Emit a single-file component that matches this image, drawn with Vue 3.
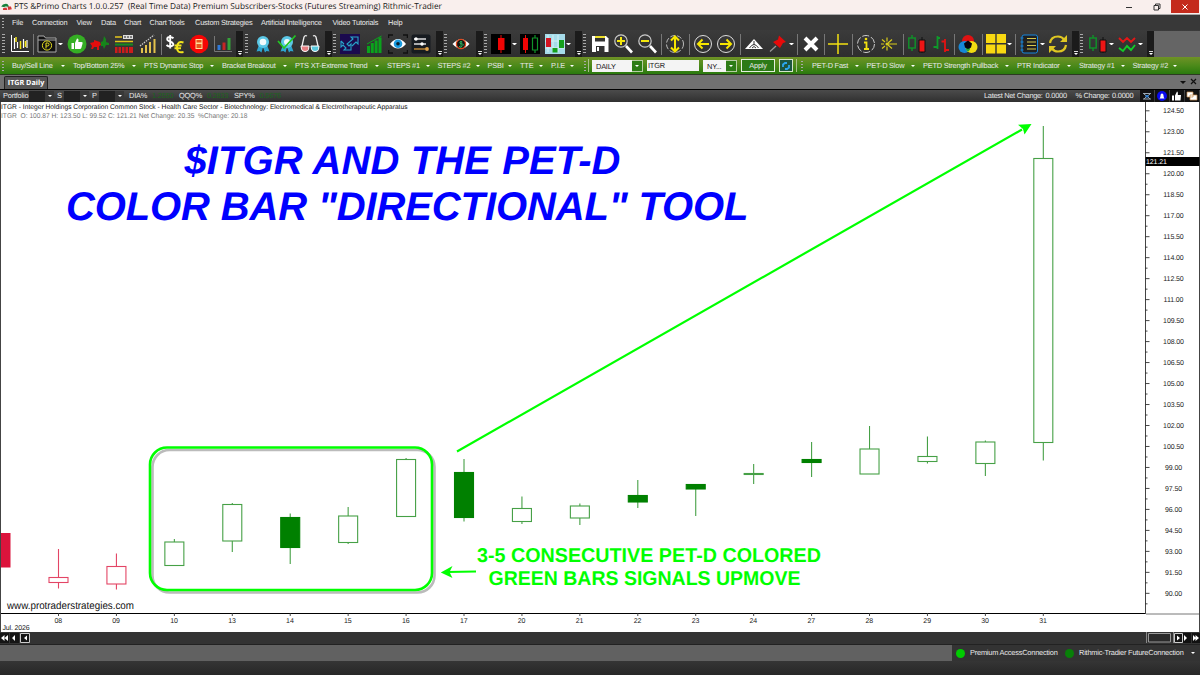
<template>
  <div class="app">
    <svg class="defs" width="0" height="0">
      <defs>
        <symbol id="i-chart" viewBox="0 0 20 20">
          <path d="M1.500 1v16.500H19" stroke="#fff" fill="none" />
          <path d="M4.500 4v11M7.500 8v6M13.500 5v9M17 6v8" stroke="#fff" stroke-width="1.200" />
          <path d="M6 3v5M10.500 7v8M15.500 7v6" stroke="#f1df16" stroke-width="1.500" />
        </symbol>
        <symbol id="i-folder" viewBox="0 0 20 20">
          <path d="M1 18V2h6l1.500 2H19v14z" fill="#111" stroke="#aaa" />
          <path d="M1 6h18" stroke="#aaa" />
          <circle cx="10" cy="11.500" r="4.600" fill="none" stroke="#e8e020" />
          <path d="M9 14.500V9h1.500a1.500 1.500 0 0 1 0 3H9" fill="none" stroke="#e8e020" />
        </symbol>
        <symbol id="i-like" viewBox="0 0 20 20">
          <circle cx="10" cy="10" r="9.500" fill="#35ae24" />
          <path d="M4.500 9h2.500v6H4.500zM8 9l2-4.500c1.500 0 1.800 1 1.300 3.500h3.200c1.500 0 1.200 1.300.8 2.500l-1 3.500q-.3 1-1.500 1H8z" fill="#fff" />
        </symbol>
        <symbol id="i-bulls" viewBox="0 0 20 20">
          <path d="M0 9l4-1V6l3 1 3 1 1 3-2 1v4H7v-3l-3 0-1 2H1l1-3z" fill="#e30d0d" />
          <path d="M11 8l2-1 1-5 2 3 0 3 3 1v2l-3 0-2 4-1-3-2 0z" fill="#16851b" />
        </symbol>
        <symbol id="i-levels" viewBox="0 0 20 20">
          <path d="M1 3h7M1 7.500h18" stroke="#e3c51c" stroke-width="1.500" />
          <path d="M9 1h10v4H9z" fill="#ddd" />
          <path d="M11 2v2M14 2v2M17 2v2" stroke="#222" />
          <path d="M1 10.500h18" stroke="#168a20" stroke-width="2" />
          <path d="M1 13h18v6H1z" fill="#cc1c1c" />
          <path d="M4 13v6M7.500 13v6M11 13v6M14.500 13v6" stroke="#333" />
        </symbol>
        <symbol id="i-growth" viewBox="0 0 20 20">
          <path d="M4 19v-5M8 19v-8M12 19V8M16.500 19V5" stroke="#e3c24c" stroke-width="2" />
          <path d="M2 12l5-4 4-3 5-4" stroke="#ccc" stroke-width="1.300" stroke-dasharray="1.500 1" fill="none" />
        </symbol>
        <symbol id="i-money" viewBox="0 0 20 20">
          <path d="M8.500 4.300Q7 3 5 3 2.200 3.200 2.200 5T5 7.500 8.300 10 5 12.500Q3 12.500 1.500 11M5.200 1v13.500" fill="none" stroke="#fff" stroke-width="1.900" />
          <path d="M18.500 8.500Q12.500 6.500 12 13t6.500 5M9.500 11.500h7M9.500 14.300h6.500" fill="none" stroke="#f3e51b" stroke-width="1.900" />
        </symbol>
        <symbol id="i-calc" viewBox="0 0 20 20">
          <circle cx="10" cy="10" r="9.300" fill="#f60505" />
          <path d="M6.500 5h7v10h-7z" fill="#ffdf9c" />
          <path d="M7.500 6h5v2.500h-5zM7.500 10h5v4h-5z" fill="#e8541b" />
        </symbol>
        <symbol id="i-bars" viewBox="0 0 20 20">
          <path d="M2.500 2v15.500H20" stroke="#777" fill="none" />
          <path d="M7 16v-5" stroke="#2f79d8" stroke-width="3" />
          <path d="M12 16V8.500" stroke="#c82626" stroke-width="3" />
          <path d="M17 16V4" stroke="#35a33a" stroke-width="3" />
        </symbol>
        <symbol id="i-ribbon" viewBox="0 0 20 20">
          <path d="M6 11l-2.500 6.500 3-.5 2 1.500L10 13l2 5.500 1.500-1.500 3 .5L14 11" fill="#2fa5cf" />
          <circle cx="10" cy="8" r="6" fill="#5cc8e6" />
          <circle cx="10" cy="8" r="3.300" fill="#f3fafc" />
        </symbol>
        <symbol id="i-ribbon-check" viewBox="0 0 20 20">
          <path d="M6 11l-2.500 6.500 3-.5 2 1.500L10 13l2 5.500 1.500-1.500 3 .5L14 11" fill="#2fa5cf" />
          <circle cx="10" cy="8" r="6" fill="#5cc8e6" />
          <circle cx="10" cy="8" r="3" fill="#f3fafc" />
          <path d="M1 7l6 7L18.500 1.500" fill="none" stroke="#22c722" stroke-width="1.700" />
        </symbol>
        <symbol id="i-glasses" viewBox="0 0 20 20">
          <path d="M2 12L4 3q1-2 3-1M18 12L16 3q-1-2-3-1" fill="none" stroke="#eee" stroke-width="1.300" />
          <path d="M1 12h8l-.5 3.500q-.5 2-3.500 2T1.500 15z" fill="#e57f83" stroke="#fff" />
          <path d="M11 12h8l-.5 3.500q-.5 2-3.500 2T11.500 15z" fill="#58c8dd" stroke="#fff" />
        </symbol>
        <symbol id="i-swing" viewBox="0 0 20 20">
          <path d="M0 0h20v20H0z" fill="#1b0a4e" />
          <path d="M1 7v6l2-2 3 3-2 2h7v-6l-2 2-2-2 6-5-2-2h7v7l-2-2-4 4M1 7l3 3" fill="none" stroke="#28a3c9" stroke-width="1.100" />
        </symbol>
        <symbol id="i-stairs" viewBox="0 0 20 20">
          <path d="M4.500 19v-7M8.300 19V9M12.100 19V6.500M16 19V3.500" stroke="#0aa31c" stroke-width="3" />
          <path d="M3 10L17.500 2" stroke="#0aa31c" />
        </symbol>
        <symbol id="i-eye" viewBox="0 0 20 20">
          <path d="M.5 4V1H5M15 1h4.500v3M.5 16v3H5M15 19h4.500v-3" fill="none" stroke="#111" stroke-width="1.500" />
          <path d="M2 10q8-10 16 0-8 9-16 0z" fill="#fff" />
          <circle cx="10" cy="9.700" r="4.300" fill="#1a9be0" />
          <circle cx="10" cy="9.700" r="1.800" fill="#07222f" />
        </symbol>
        <symbol id="i-sliders" viewBox="0 0 20 20">
          <rect x=".5" y=".5" width="19" height="19" rx="2" fill="#171b20" />
          <path d="M3 5h12M3 10h12" stroke="#ddd" stroke-width="1.300" />
          <path d="M3 15h14" stroke="#b98232" stroke-width="1.500" />
          <circle cx="5" cy="5" r="1.700" fill="#fff" /><circle cx="11" cy="10" r="1.700" fill="#fff" />
          <circle cx="16" cy="15" r="1.900" fill="#e1a44d" />
        </symbol>
        <symbol id="i-eye-red" viewBox="0 0 20 20">
          <path d="M1.500 10q8.500-9.500 17 0-8.500 9-17 0z" fill="#fff" />
          <circle cx="10" cy="10" r="4.600" fill="#151515" stroke="#e1491d" stroke-width="1.300" />
          <path d="M11.300 8q-2.500-1-2.500.5t2.400 1.500-.2 2.400-2.500-.4M10 7v6" fill="none" stroke="#2fcf6b" stroke-width=".8" />
        </symbol>
        <symbol id="i-candle-red" viewBox="0 0 20 20">
          <path d="M0 0h20v20H0z" />
          <path d="M10 1v18" stroke="#e80c0c" />
          <path d="M7 4h6.500v12H7z" fill="#f00505" />
        </symbol>
        <symbol id="i-candle-pair" viewBox="0 0 20 20">
          <path d="M0 0h20v20H0z" />
          <path d="M5.500 1v18" stroke="#e80c0c" />
          <path d="M3 4h5v12H3z" fill="#f00505" />
          <path d="M15 1v3M15 16v3M12.500 4h5v12h-5z" fill="none" stroke="#11932a" stroke-width="1.200" />
        </symbol>
        <symbol id="i-pattern" viewBox="0 0 20 20">
          <path d="M0 0h20v20H0z" fill="#a6dcea" />
          <path d="M3 1v17M8 1v17M13 1v17M0 7h20M0 14h20" stroke="#d6f0f5" />
          <path d="M1 4h5v9H1z" fill="#d41522" />
          <path d="M7.500 14h5v4.500h-5zM14 6h5v8h-5z" fill="#15a01c" />
        </symbol>
        <symbol id="i-save" viewBox="0 0 20 20">
          <path d="M2 2h14l2.500 2.500V18H2z" fill="#fff" />
          <path d="M5 2h10v5.500H5zM6 12h8.500v6H6z" fill="#333" />
          <path d="M5 3h10" stroke="#eee02b" stroke-width="2" /><path d="M8 13v4" stroke="#fff" stroke-width="2" />
        </symbol>
        <symbol id="i-zoom-in" viewBox="0 0 20 20">
          <circle cx="7" cy="7" r="6.200" fill="none" stroke="#ccc" stroke-width="1.200" />
          <path d="M3 7h8M7 3v8" stroke="#f4e70d" stroke-width="2" />
          <path d="M12 12l6 6.500" stroke="#fff" stroke-width="2.600" />
        </symbol>
        <symbol id="i-zoom-out" viewBox="0 0 20 20">
          <circle cx="7" cy="7" r="6.200" fill="none" stroke="#ccc" stroke-width="1.200" />
          <path d="M3 7h8" stroke="#f4e70d" stroke-width="2" />
          <path d="M12 12l6 6.500" stroke="#fff" stroke-width="2.600" />
        </symbol>
        <symbol id="i-updown" viewBox="0 0 20 20">
          <circle cx="10" cy="10" r="8.500" fill="none" stroke="#bbb" stroke-dasharray="5 2" />
          <path d="M10 3v14M6 6.500L10 2.500l4 4M6 13.500l4 4 4-4" fill="none" stroke="#f7e600" stroke-width="2" />
        </symbol>
        <symbol id="i-left" viewBox="0 0 20 20">
          <circle cx="10" cy="10" r="8.500" fill="none" stroke="#ddd" />
          <path d="M16 10H5M9.500 5.500L5 10l4.500 4.500" fill="none" stroke="#f7e600" stroke-width="2" />
        </symbol>
        <symbol id="i-right" viewBox="0 0 20 20">
          <circle cx="10" cy="10" r="8.500" fill="none" stroke="#ddd" />
          <path d="M4 10h11M10.500 5.500L15 10l-4.500 4.500" fill="none" stroke="#f7e600" stroke-width="2" />
        </symbol>
        <symbol id="i-ruler" viewBox="0 0 20 20">
          <path d="M10 5L1 15h18z" fill="#fff" />
          <path d="M5.500 14q4.500-7 9 0M8 14q2-3 4 0M10 7v4" fill="none" stroke="#333" />
        </symbol>
        <symbol id="i-pin" viewBox="0 0 20 20">
          <path d="M8 12l-6 5.500" stroke="#999" stroke-width="1.300" />
          <path d="M11 1.500l7 6.500-3 1-3 5-7-6 5-2.500z" fill="#e60a0a" />
        </symbol>
        <symbol id="i-close" viewBox="0 0 20 20"><path d="M4 4l12 12M16 4L4 16" stroke="#fff" stroke-width="4" /></symbol>
        <symbol id="i-cross" viewBox="0 0 20 20"><path d="M10 0v20M0 10h20" stroke="#f2e011" stroke-width="1.500" /></symbol>
        <symbol id="i-info" viewBox="0 0 20 20">
          <circle cx="10" cy="10" r="8.500" fill="none" stroke="#ccc" stroke-dasharray="7 2" />
          <path d="M8 8.500h2.500V15M8 15h5" fill="none" stroke="#f2e011" stroke-width="1.800" />
          <circle cx="10" cy="5" r="1.300" fill="#f2e011" />
        </symbol>
        <symbol id="i-spark" viewBox="0 0 20 20">
          <path d="M8 10h10M2 10h3M8 3.500v4M8 12.500v4M3 5.500l3 2.500M3 14.500l3-2.500M9 9l4-3.500M9 11l4 3.500" fill="none" stroke="#d9cc1b" stroke-width="1.200" />
          <circle cx="8" cy="10" r="1.500" fill="#d9cc1b" />
        </symbol>
        <symbol id="i-candles" viewBox="0 0 20 20">
          <path d="M5 1v3M5 14v3M1.800 4H8.200v10H1.800z" fill="none" stroke="#118f2a" stroke-width="1.500" />
          <path d="M15 3v16" stroke="#111" />
          <path d="M12 6h6v12h-6z" fill="#ee1515" stroke="#111" />
        </symbol>
        <symbol id="i-ohlc" viewBox="0 0 20 20">
          <path d="M6.500 2v13M2.500 13h4M6.500 4H9" stroke="#0e9a2a" stroke-width="1.800" />
          <path d="M14 5v13M10.500 7.500H14M14 16h4" stroke="#e31212" stroke-width="1.800" />
        </symbol>
        <symbol id="i-rgb" viewBox="0 0 20 20">
          <circle cx="10" cy="7" r="6" fill="#e01212" />
          <circle cx="6.500" cy="13" r="6" fill="#1688d8" />
          <circle cx="13.500" cy="13" r="6" fill="#f2dc12" />
          <path d="M10 8.200a6 6 0 0 1 0 9.600 6 6 0 0 1 0-9.600z" fill="#1ea53a" />
          <path d="M10 6.500l4 3-1 4-3 1.500-3-1.500-1-4z" fill="#04050f" />
        </symbol>
        <symbol id="i-grid" viewBox="0 0 20 20"><path d="M0 0h9.300v9H0zM10.700 0H20v9h-9.300zM0 10.500h9.300v9H0zM10.700 10.500H20v9h-9.300z" fill="#f9d911" /></symbol>
        <symbol id="i-list" viewBox="0 0 20 20">
          <rect x="3" y="1" width="15.500" height="18" rx="2" fill="#202020" stroke="#1787df" />
          <path d="M1.500 4h3M1.500 8h3M1.500 12h3M1.500 16h3" stroke="#1787df" />
          <path d="M8 4.500h9M8 8h9M8 11.500h9M8 15h9" stroke="#d6c84d" />
        </symbol>
        <symbol id="i-refresh" viewBox="0 0 20 20">
          <path d="M2 9Q3 2.500 10 2.500q4 0 6.500 3.500M18 11q-1 6.500-8 6.500-4 0-6.500-3.500" fill="none" stroke="#dfc722" stroke-width="2.200" />
          <path d="M19 1v7h-7zM1 19v-7h7z" fill="#dfc722" />
        </symbol>
        <symbol id="i-zigzag" viewBox="0 0 20 20">
          <path d="M2 4l4 4 4-4 4 4 4-4" fill="none" stroke="#e31717" stroke-width="1.900" />
          <path d="M2 14l4 3 4-5 4 4 4-5" fill="none" stroke="#12cc28" stroke-width="1.900" />
        </symbol>
      </defs>
    </svg>

    <header class="titlebar">
      <svg class="logo" viewBox="0 0 12 9">
        <path d="M0 4q2-4 7-3l2 3-4 1z" fill="#16813b" />
        <path d="M2 6l4-1 1 3H2zM7 4h4l1 3-4 1z" fill="#d53636" /><path d="M4 4.500h3" stroke="#fff" />
      </svg>
      <span class="title">PTS &amp;Primo Charts 1.0.0.257&nbsp; (Real Time Data) Premium Subscribers-Stocks (Futures Streaming) Rithmic-Tradier</span>
      <span class="win-btn"><svg width="8" height="8"><path d="M1 4.500h6" stroke="#333" /></svg></span>
      <span class="win-btn">
        <svg width="8" height="8"><path d="M1 2.500h4.500V7H1zM2.500 2.500V1H7v4.500H5.500" fill="none" stroke="#333" /></svg>
      </span>
      <span class="win-btn win-close"><svg width="8" height="8"><path d="M1.500 1.500l5 5M6.500 1.500l-5 5" stroke="#fff" /></svg></span>
      <span class="win-edge"></span>
    </header>

    <nav class="menu">
      <i class="grip"></i>
      <span v-for="m in menus" :key="m.label" :style="{ width: m.w + 'px' }">{{ m.label }}</span>
    </nav>

    <div class="toolbar">
      <template v-for="(t, i) in tools" :key="i">
        <svg v-if="t[0].startsWith('i-')" class="tool" :style="{ marginLeft: t[1] + 'px' }"><use :href="'#' + t[0]" /></svg>
        <i v-else :class="t[0]" :style="{ marginLeft: t[1] + 'px' }"></i>
      </template>
      <i class="toolbar-rest"></i>
    </div>

    <div class="strategies">
      <i class="grip"></i>
      <div class="strategy-list">
        <span v-for="s in strategies" :key="s.label" class="strategy" :style="{ width: s.w + 'px' }">
          {{ s.label }}<i class="caret"></i>
        </span>
      </div>
      <i class="grip"></i>
      <div class="symbol-form">
        <span class="field period">DAILY</span><span class="drop"><i class="caret"></i></span>
        <span class="field ticker">ITGR</span>
        <span class="field exchange">NY...</span><span class="drop"><i class="caret"></i></span>
        <span class="apply">Apply</span>
        <span class="reload">
          <svg width="10" height="10"><path d="M2 6V3.500L4 2h2M8 4v2.500L6 8H4" fill="none" stroke="#2ba6ee" stroke-width="1.800" /></svg>
        </span>
      </div>
      <i class="grip"></i>
      <div class="strategy-list second">
        <span v-for="s in petd" :key="s.label" class="strategy" :style="{ width: s.w + 'px' }">
          {{ s.label }}<i class="caret"></i>
        </span>
      </div>
    </div>

    <div class="tabs">
      <span class="tab">ITGR Daily</span>
      <svg class="tab-tools" width="20" height="10"><path d="M1 4h6L4 7z" fill="#111" /><path d="M12 2l5 5M17 2l-5 5" stroke="#111" stroke-width="1.200" /></svg>
    </div>

    <div class="quotes">
      <span class="lbl-portfolio">Portfolio</span><span class="combo"><i class="caret"></i></span>
      <span class="lbl-short">S</span><span class="combo"><i class="caret"></i></span>
      <span class="lbl-short">P</span><span class="combo"><i class="caret"></i></span>
      <div class="quote-list">
        <span v-for="q in quotes" :key="q.label" class="quote" :style="{ width: q.w + 'px' }">{{ q.label }}<b>{{ q.value }}</b></span>
      </div>
      <span class="net">Latest Net Change:</span><span class="net-value">0.0000</span>
      <span class="pct">% Change:</span><span class="pct-value">0.0000</span>
      <svg class="quote-icons" width="60" height="12">
        <path d="M0 0h14v12H0zM15 0h14v12H15zM30 0h14v12H30zM45 0h14v12H45z" fill="#111" />
        <path d="M3 3.500h8M3 9h8M4 4l2.500 2M10 4L7.500 6M4 9l2-2M10 9L8 7" stroke="#9aa7b2" /><path d="M5.500 5h3v2.500h-3z" fill="#2e7fd0" />
        <circle cx="22" cy="6" r="5" fill="#0a0af0" />
        <path d="M19.500 8.500q1-1 1-3 0-2 1.500-2t1.500 2q0 2 1 3z" fill="#fff" />
        <path d="M32 5.500h2v5h-2zM35 5.500l2-4q1.200 0 .8 3.500H41l-.5 5.500H35z" fill="#fff" />
        <path d="M47 2h6v5h-6zM50 5h7v5h-7z" fill="#fff" stroke="#c98e4d" stroke-width=".7" />
      </svg>
    </div>

    <svg class="chart" width="1200" height="530" viewBox="0 102 1200 530">
      <rect y="102" width="1200" height="530" fill="#fff" />
      <text class="desc" x="1" y="108.500" textLength="406.500" lengthAdjust="spacingAndGlyphs">ITGR - Integer Holdings Corporation Common Stock - Health Care Sector - Biotechnology: Electromedical &amp; Electrotherapeutic Apparatus</text>
      <text class="ohlc" x="1" y="118" textLength="246.500" lengthAdjust="spacingAndGlyphs">ITGR&#160; O: 100.87 H: 123.50 L: 99.52 C: 121.21 Net Change: 20.35&#160; %Change: 20.18</text>

      <!-- candles -->
      <rect x="0" y="533" width="10.500" height="34.500" fill="#dc143c" />
      <g v-for="c in candles" :key="c.day" :class="['candle', c.type]">
        <line :x1="c.x" :x2="c.x" :y1="c.high" :y2="c.top" />
        <line :x1="c.x" :x2="c.x" :y1="c.bottom" :y2="c.low" />
        <rect :x="c.x - 9.500" :y="c.top" width="19" :height="c.bottom - c.top" />
      </g>

      <!-- axes -->
      <path d="M0 613.500H1145" stroke="#000" stroke-width="1.200" />
      <path d="M1146 614H1200" stroke="#777" />
      <path d="M1145.500 102V614" stroke="#444" />
      <path d="M0.500 102V632" stroke="#444" />
      <path d="M1199.500 102V632" stroke="#444" />
      <g v-for="p in prices" :key="p.label">
        <line class="tick" x1="1145" x2="1149.500" :y1="p.y" :y2="p.y" />
        <line class="tick" x1="1145" x2="1147.500" :y1="p.y + 10.490" :y2="p.y + 10.490" />
        <text class="axis" x="1173.500" :y="p.y + 2.500" text-anchor="middle">{{ p.label }}</text>
      </g>
      <rect x="1145.500" y="157" width="54" height="9" />
      <text class="axis last" x="1146" y="163.900">121.21</text>
      <g v-for="c in candles" :key="'d' + c.day">
        <line class="tick" :x1="c.x" :x2="c.x" y1="613" y2="616" />
        <text class="axis" :x="c.x - 0.300" y="622.500" text-anchor="middle">{{ c.day }}</text>
      </g>
      <text class="axis" x="2.500" y="630" textLength="27">Jul. 2026</text>

      <!-- annotations -->
      <text class="site" x="7" y="608.500" textLength="127" lengthAdjust="spacingAndGlyphs">www.protraderstrategies.com</text>
      <text class="headline" x="184.500" y="174" textLength="436">$ITGR AND THE PET-D</text>
      <text class="headline" x="66" y="220" textLength="682.500">COLOR BAR "DIRECTIONAL" TOOL</text>
      <rect class="box-shadow" x="152.500" y="450" width="282" height="142.500" rx="17" />
      <rect class="box" x="150" y="447.500" width="282" height="142.500" rx="17" />
      <path d="M457 451.500L1022 129.500M476 571.500L447 572" stroke="#0f0" stroke-width="2.200" />
      <path d="M1031.500 124L1024.500 134.500 1023 129 1018 124.800zM440.800 572.500L452.500 566 449.500 572 452.500 578z" fill="#0f0" />
      <text class="note" x="477" y="562" textLength="344" lengthAdjust="spacingAndGlyphs">3-5 CONSECUTIVE PET-D COLORED</text>
      <text class="note" x="488.500" y="585.300" textLength="312" lengthAdjust="spacingAndGlyphs">GREEN BARS SIGNALS UPMOVE</text>
    </svg>

    <div class="scroll">
      <svg width="31" height="12">
        <path d="M0 1h9v10H0zM10 1h9v10h-9z" fill="#151515" /><path d="M20.500 1.500h9v9h-9z" fill="#151515" stroke="#ccc" />
        <path d="M4.500 3v6L1 6zM8 3v6L4.500 6zM15 3v6l-3-3zM27 3.500v5L24 6z" fill="#fff" />
      </svg>
      <svg width="55" height="12">
        <path d="M1.500 0v11M28.500 0v11" stroke="#888" /><path d="M3.500 1.500h22v8.500h-22z" fill="#2a2a2a" stroke="#999" />
        <path d="M29.500 1.500h8v9h-8z" fill="#151515" stroke="#ccc" /><path d="M38 1h8v10h-8zM47 1h8v10h-8z" fill="#111" />
        <path d="M32 3.500v5L35 6zM39 3v6l3-3zM48 3v6l3-3zM50.500 3v6L54 6z" fill="#fff" />
      </svg>
    </div>

    <footer class="status">
      <div class="connections">
        <i class="led on"></i><span class="conn-a">Premium AccessConnection</span>
        <i class="led"></i><span class="conn-b">Rithmic-Tradier FutureConnection</span><i class="caret"></i>
      </div>
    </footer>
    <div class="bottom"></div>
  </div>
</template>

<script setup>
const menus = [
  { label: 'File', w: 20 },
  { label: 'Connection', w: 44.5 },
  { label: 'View', w: 24.5 },
  { label: 'Data', w: 23 },
  { label: 'Chart', w: 25.5 },
  { label: 'Chart Tools', w: 45.5 },
  { label: 'Custom Strategies', w: 66 },
  { label: 'Artificial Intelligence', w: 71.5 },
  { label: 'Video Tutorials', w: 55.5 },
  { label: 'Help', w: 20 }
];

// [kind, gap before it]
const tools = [
  ['grip', 2], ['i-chart', 5], ['sep', 3], ['i-folder', 3], ['caret', 1], ['i-like', 4], ['i-bulls', 3],
  ['i-levels', 4], ['i-growth', 4], ['sep', 3], ['i-money', 3], ['i-calc', 4], ['i-bars', 3], ['over', 4],
  ['grip', 2], ['i-ribbon', 5], ['i-ribbon-check', 4], ['i-glasses', 3], ['over', 5],
  ['grip', 1], ['i-swing', 4], ['i-stairs', 4], ['i-eye', 4], ['i-sliders', 3], ['over', 5],
  ['grip', 1], ['i-eye-red', 4], ['over', 5],
  ['grip', 1], ['i-candle-red', 4], ['caret', 1], ['i-candle-pair', 3], ['i-pattern', 5], ['caret', 1], ['over', 4],
  ['grip', 1], ['i-save', 4], ['i-zoom-in', 4], ['i-zoom-out', 4], ['sep', 3], ['i-updown', 3], ['sep', 4],
  ['i-left', 3], ['i-right', 3], ['sep', 4], ['i-ruler', 3], ['i-pin', 4], ['caret', 1], ['sep', 3],
  ['i-close', 3], ['sep', 3], ['i-cross', 3], ['sep', 4], ['i-info', 3], ['i-spark', 3], ['sep', 4],
  ['i-candles', 3], ['i-ohlc', 4], ['sep', 3], ['i-rgb', 3], ['sep', 4], ['i-grid', 3], ['caret', 1],
  ['sep', 3], ['i-list', 3], ['caret', 1], ['i-refresh', 3], ['over', 4],
  ['grip', 1], ['i-candles', 5], ['caret', 1], ['i-zigzag', 3], ['caret', 1], ['over', 4]
];

const strategies = [
  { label: 'Buy/Sell Line', w: 61 },
  { label: 'Top/Bottom 25%', w: 71 },
  { label: 'PTS Dynamic Stop', w: 78 },
  { label: 'Bracket Breakout', w: 73 },
  { label: 'PTS XT-Extreme Trend', w: 92 },
  { label: 'STEPS #1', w: 50.5 },
  { label: 'STEPS #2', w: 50 },
  { label: 'PSBI', w: 32.5 },
  { label: 'TTE', w: 31 },
  { label: 'P.I.E', w: 31 }
];

const petd = [
  { label: 'PET-D Fast', w: 54.5 },
  { label: 'PET-D Slow', w: 56.5 },
  { label: 'PETD Strength Pullback', w: 94 },
  { label: 'PTR Indicator', w: 62 },
  { label: 'Strategy #1', w: 53.5 },
  { label: 'Strategy #2', w: 52.5 }
];

const quotes = [
  { label: 'DIA%', value: '1.2550', w: 50 },
  { label: 'QQQ%', value: '0.2833', w: 55 },
  { label: 'SPY%', value: '0.5676', w: 50 }
];

// day, high, body top, body bottom, low, type
const bars = [
  ['08', 549, 577.5, 582.5, 588.5, 'red'],
  ['09', 553.5, 566.5, 584, 589.5, 'red'],
  ['10', 539, 542, 565.5, 565.5, 'up'],
  ['13', 503, 504.5, 541, 552, 'up'],
  ['14', 513.5, 517.5, 547.5, 564, 'down'],
  ['15', 507, 516, 542.5, 544, 'up'],
  ['16', 458, 459.5, 516.5, 516.5, 'up'],
  ['17', 459, 472.5, 517.5, 521.5, 'down'],
  ['20', 496.5, 508.5, 521.5, 524, 'up'],
  ['21', 503.5, 506, 518, 525, 'up'],
  ['22', 480, 495.5, 502, 508, 'down'],
  ['23', 484.5, 484.5, 489, 516, 'down'],
  ['24', 464, 473.5, 474.5, 484, 'up'],
  ['27', 442, 459.5, 462.5, 477, 'down'],
  ['28', 426, 449, 474, 474, 'up'],
  ['29', 436.5, 456.5, 461.5, 463.5, 'up'],
  ['30', 440.5, 442, 463.5, 476, 'up'],
  ['31', 126, 158.5, 442.5, 460.5, 'up']
];

const candles = bars.map(([day, high, top, bottom, low, type], i) => ({
  day, high, top, bottom, low, type,
  x: 58.5 + i * 57.93
}));

const prices = [];
for (let i = 0; i < 24; i++) {
  prices.push({ label: (124.5 - i * 1.5).toFixed(2), y: 110.8 + i * 20.98 });
}
</script>

<style>
body {
  background: #2b2b2b;
  overflow: hidden;
}
</style>

<style scoped>
.app {
  width: 1200px;
  height: 675px;
  display: flex;
  flex-direction: column;
  font: 7.4px/1 "Liberation Sans", Arial, sans-serif;
  letter-spacing: -0.2px;
  color: #e8e8e8;
  white-space: nowrap;
  overflow: hidden;
  text-rendering: geometricPrecision;
}
.app > * {
  flex: none;
}
.app > .defs {
  position: absolute;
}
i {
  display: block;
  flex: none;
}

/* title bar */
.titlebar {
  display: flex;
  align-items: center;
  height: 14px;
  background: #f9efed;
  border-bottom: 1px solid #aaa;
  color: #222;
}
.logo {
  width: 11px;
  height: 8px;
  margin: 0 2px 0 1px;
}
.title {
  flex: 1;
  font: 8.28px/14px "Open Sans", "Noto Sans", sans-serif;
  letter-spacing: 0;
}
.win-btn {
  width: 28px;
  height: 13px;
  display: flex;
  align-items: center;
  justify-content: center;
}
.win-close {
  align-self: flex-start;
  background: #c42b1c;
}
.win-edge {
  width: 1px;
}

/* menu */
.menu {
  display: flex;
  align-items: center;
  height: 15px;
  background: #383838;
}
.menu span {
  flex: none;
}
.grip {
  width: 2px;
  background: repeating-linear-gradient(#aaa 0 1px, transparent 1px 3px);
}
.menu .grip {
  height: 10px;
  margin: 0 8px 0 2px;
}

/* icon toolbar */
.toolbar {
  display: flex;
  align-items: center;
  height: 26px;
  padding-top: 1px;
  background: linear-gradient(#3b3b3b, #2e2e2e);
}
.toolbar > * {
  flex: none;
}
.tool {
  width: 20px;
  height: 20px;
}
.toolbar .grip {
  width: 3px;
  height: 21px;
}
.sep {
  width: 1px;
  height: 21px;
  background: #777;
}
.caret {
  width: 0;
  height: 0;
  border: 2px solid transparent;
  border-top-color: #fff;
  border-bottom: 0;
}
.toolbar .caret {
  width: 1px;
}
.over {
  width: 7px;
  height: 26px;
  background: #1b1b1b;
  display: flex;
  flex-direction: column;
  align-items: center;
  justify-content: flex-end;
}
.over::before {
  content: "";
  width: 4px;
  height: 1px;
  margin-bottom: 1px;
  background: #ddd;
}
.over::after {
  content: "";
  border: 2px solid transparent;
  border-top-color: #fff;
  border-bottom: 0;
  margin-bottom: 2px;
}
.toolbar .toolbar-rest {
  flex: 1;
  height: 26px;
  background: #656565;
}

/* green strategy strip */
.strategies {
  display: flex;
  align-items: center;
  height: 17px;
  background: linear-gradient(#6f9226, #4c8a1a 50%, #2a7a0e);
  border-bottom: 1px solid #2c3a22;
}
.strategies .grip {
  height: 10px;
  margin-left: 2px;
}
.strategy-list {
  display: flex;
  width: 570px;
  margin-left: 8px;
}
.strategy-list.second {
  margin-left: 9px;
  width: auto;
}
.strategy {
  flex: none;
  display: flex;
  align-items: center;
  box-sizing: border-box;
  padding-right: 8px;
}
.strategy .caret {
  margin-left: auto;
}
.symbol-form {
  display: flex;
  align-items: center;
  width: 209px;
  padding-left: 3px;
  margin-left: 3px;
  margin-right: 2px;
  box-sizing: border-box;
  border-left: 1px solid #a9c08c;
  border-right: 1px solid #a9c08c;
}
.strategies .symbol-form {
  margin-left: 2px;
}
.field {
  background: #f4f4f4;
  color: #222;
  height: 12px;
  line-height: 13px;
  padding-left: 4px;
  box-sizing: border-box;
}
.period {
  width: 40px;
}
.ticker {
  width: 52px;
  height: 11px;
  line-height: 11px;
  margin: 0 4px;
  padding-left: 1px;
}
.exchange {
  width: 23px;
}
.drop {
  width: 11px;
  height: 12px;
  display: flex;
  align-items: center;
  justify-content: center;
  background: #2d7c16;
  border: 1px solid #b7cda4;
  border-left: 0;
  box-sizing: border-box;
}
.apply {
  width: 34px;
  height: 13px;
  line-height: 11px;
  text-align: center;
  box-sizing: border-box;
  border: 1px solid #e5efe0;
  background: #2c7a17;
  margin: 0 4px;
}
.reload {
  width: 14px;
  height: 13px;
  display: flex;
  align-items: center;
  justify-content: center;
  box-sizing: border-box;
  border: 1px solid #d6e5cc;
  background: #1d5540;
}

/* document tabs */
.tabs {
  display: flex;
  align-items: flex-end;
  justify-content: space-between;
  height: 14px;
  background: #717171;
  border-bottom: 1px solid #000;
  padding: 0 1px 0 4px;
}
.tab {
  box-sizing: border-box;
  width: 44px;
  height: 13px;
  border: 1px solid #222;
  border-bottom: 0;
  border-radius: 2px 2px 0 0;
  background: #555;
  color: #fff;
  text-align: center;
  font: bold 7.2px/13px "Open Sans", "Noto Sans", sans-serif;
  letter-spacing: 0;
}
.tab-tools {
  align-self: center;
}

/* quote bar */
.quotes {
  display: flex;
  align-items: center;
  height: 12px;
  background: linear-gradient(#4b4b4b, #303030);
  padding-left: 3px;
}
.lbl-portfolio {
  width: 26px;
}
.combo {
  width: 25px;
  height: 11px;
  display: flex;
  align-items: center;
  justify-content: flex-end;
  background: linear-gradient(90deg, #222 16px, #383838 16px);
  padding-right: 2px;
  box-sizing: border-box;
}
.lbl-short {
  width: 7px;
  margin-left: 3px;
}
.quote-list {
  display: flex;
  margin-left: 5px;
}
.quote {
  flex: none;
}
.quote b {
  font-weight: normal;
  color: #1a661d;
  margin-left: 5px;
}
.net {
  margin-left: auto;
  width: 61.5px;
  letter-spacing: -0.28px;
}
.net-value {
  width: 30px;
}
.pct {
  width: 36.5px;
  letter-spacing: -0.28px;
}
.pct-value {
  width: 28px;
}

/* chart */
.chart {
  display: block;
}
.chart text {
  letter-spacing: 0;
}
.chart .desc {
  font-size: 6.8px;
  fill: #111;
}
.chart .ohlc {
  font-size: 7px;
  fill: #777;
}
.candle line,
.candle rect {
  stroke: #46a046;
  stroke-width: 1.1;
  fill: #fff;
}
.candle.red line,
.candle.red rect {
  stroke: #e34565;
}
.candle.down rect {
  fill: #008000;
  stroke: #008000;
}
.tick {
  stroke: #333;
  stroke-width: 0.9;
}
.chart .axis {
  font-size: 7px;
  letter-spacing: -0.1px;
  fill: #222;
}
.chart .axis.last {
  fill: #fff;
}
.site {
  font-size: 10.6px;
  fill: #111;
}
.headline {
  font: italic bold 40px "Liberation Sans", Arial, sans-serif;
  fill: #00f;
}
.note {
  font: bold 20px "Liberation Sans", Arial, sans-serif;
  fill: #0f0;
}
.box,
.box-shadow {
  fill: none;
  stroke: #0f0;
  stroke-width: 2.6;
}
.box-shadow {
  stroke: #bbb;
}

/* bottom bars */
.scroll {
  display: flex;
  justify-content: space-between;
  height: 12px;
  background: #333;
  border-bottom: 1px solid #222;
}
.status {
  display: flex;
  justify-content: flex-end;
  height: 16px;
  background: #616161;
}
.connections {
  display: flex;
  align-items: center;
  width: 248px;
  background: #333;
  padding-left: 4px;
  box-sizing: border-box;
}
.led {
  width: 9px;
  height: 9px;
  border-radius: 50%;
  background: #088008;
}
.led.on {
  background: #0c0;
}
.conn-a {
  width: 95px;
  margin-left: 5px;
}
.conn-b {
  width: 112px;
  margin-left: 5px;
}
.bottom {
  height: 15px;
  background: linear-gradient(#353535, #262626);
}
</style>
